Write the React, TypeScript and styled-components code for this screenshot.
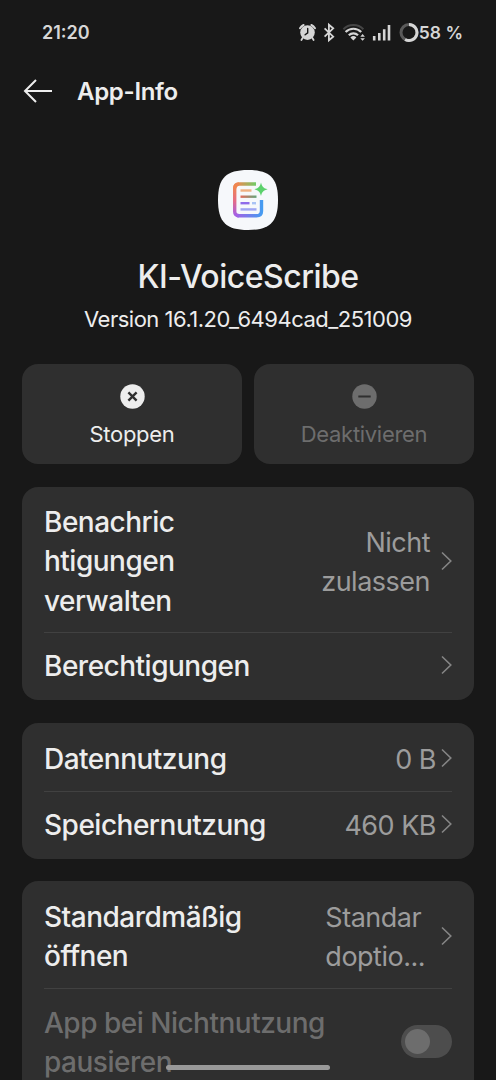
import React from "react";
import styled, { createGlobalStyle } from "styled-components";

const GlobalStyle = createGlobalStyle`
  * { box-sizing: border-box; }
  html, body { margin: 0; padding: 0; background: #181818; overflow: hidden; }
  body { font-family: Inter, "Liberation Sans", sans-serif; color: #ededed; }
`;

const Screen = styled.div`
  position: relative;
  width: 496px;
  height: 1080px;
  overflow: hidden;
  background: #181818;
  display: flex;
  flex-direction: column;
`;

const StatusBar = styled.div`
  height: 64px;
  flex: none;
  padding: 0 33px 0 42px;
  display: flex;
  align-items: center;
  justify-content: space-between;
  color: #d6d6d6;
`;

const Tracked = styled.span<{ $size: number; $weight: number; $track?: number }>`
  font-size: ${(p) => p.$size}px;
  font-weight: ${(p) => p.$weight};
  letter-spacing: ${(p) => p.$track ?? 0}px;
  white-space: nowrap;
`;

const StatusIcons = styled.div`
  display: flex;
  align-items: center;
`;

const Header = styled.header`
  height: 54px;
  flex: none;
  padding-left: 23px;
  display: flex;
  align-items: center;
  gap: 25px;
`;

const Hero = styled.section`
  height: 246px;
  flex: none;
  padding-top: 51px;
  display: flex;
  flex-direction: column;
  align-items: center;
`;

const AppName = styled.h1`
  margin: 25px 0 0;
  font-size: 32px;
  line-height: 42px;
  font-weight: 500;
  letter-spacing: -0.5px;
`;

const Version = styled.p`
  margin: 6px 0 0;
  font-size: 22px;
  line-height: 30px;
  letter-spacing: -0.5px;
`;

const Actions = styled.div`
  flex: none;
  display: grid;
  grid-template-columns: 1fr 1fr;
  gap: 12px;
  padding: 0 22px;
`;

const ActionButton = styled.button<{ $track: number }>`
  height: 100px;
  padding: 20px 0 0;
  border: 0;
  border-radius: 16px;
  background: #2f2f2f;
  color: #ededed;
  font-family: inherit;
  font-size: 22px;
  line-height: 28px;
  letter-spacing: ${(p) => p.$track}px;
  display: flex;
  flex-direction: column;
  align-items: center;
  gap: 11px;
  &:disabled { color: #6d6d6d; }
`;

const Card = styled.section<{ $top: number }>`
  flex: none;
  margin: ${(p) => p.$top}px 22px 0;
  padding: 0 22px;
  border-radius: 16px;
  background: #2f2f2f;
`;

const Row = styled.div<{ $height: number; $shift?: number; $divided?: boolean }>`
  height: ${(p) => p.$height}px;
  padding-top: ${(p) => p.$shift ?? 0}px;
  display: flex;
  align-items: center;
  border-bottom: ${(p) => (p.$divided ? "1px solid #414141" : "0")};
`;

const Label = styled.div<{ $track?: number; $muted?: boolean }>`
  flex: 1;
  font-size: 28px;
  line-height: 39.5px;
  font-weight: 500;
  letter-spacing: ${(p) => p.$track ?? -0.5}px;
  color: ${(p) => (p.$muted ? "#6d6d6d" : "#ededed")};
  white-space: nowrap;
`;

const Value = styled.div<{ $gap: number; $track?: number; $align?: string }>`
  font-size: 27px;
  line-height: 39.5px;
  letter-spacing: ${(p) => p.$track ?? -0.5}px;
  color: #9c9c9c;
  text-align: ${(p) => p.$align ?? "right"};
  margin-right: ${(p) => p.$gap}px;
  white-space: nowrap;
`;

const ChevronSvg = styled.svg`
  flex: none;
  display: block;
  margin-top: -3px;
`;

const Switch = styled.div`
  width: 51px;
  height: 33px;
  border-radius: 17px;
  padding: 4px;
  background: #4d4d4d;
  margin-top: -3px;
`;

const Thumb = styled.div`
  width: 25px;
  height: 25px;
  border-radius: 50%;
  background: #6d6d6d;
`;

const HomeBar = styled.div`
  position: absolute;
  left: 166px;
  top: 1065px;
  width: 164px;
  height: 5px;
  border-radius: 3px;
  background: #999;
`;

const Chevron = () => (
  <ChevronSvg width="11" height="20" viewBox="0 0 11 20" fill="none" stroke="#858585" strokeWidth="1.6">
    <path d="M1 1.5 9.8 10 1 18.5" />
  </ChevronSvg>
);

const StatusGlyphs = () => (
  <svg width="121" height="24" viewBox="299 20 121 24" fill="none" stroke="#d6d6d6">
    <g strokeLinecap="round">
      <circle cx="308.5" cy="32.6" r="7.3" fill="#d6d6d6" stroke="none" />
      <path d="M301 28.2a9 9 0 0 1 3.6-3.2M316 28.2a9 9 0 0 0-3.6-3.2" strokeWidth="2" />
      <path d="m303.6 38-1.2 2M313.4 38l1.2 2" strokeWidth="1.8" />
      <path d="M308.7 28.5v4.3l-2.6 2" stroke="#181818" strokeWidth="1.4" />
    </g>
    <path d="m325.6 28.4 8.6 8.2-4.3 3.6V24.8l4.3 3.6-8.6 8.2" strokeWidth="1.8" />
    <path d="M344.4 29.2a14.2 14.2 0 0 1 20 0" stroke="#454545" strokeWidth="2" />
    <path d="M346.6 32a11 11 0 0 1 15.6 0" strokeWidth="2.2" />
    <path d="M349.8 35.2a6.6 6.6 0 0 1 9.2 0" strokeWidth="2.2" />
    <path d="m351.4 37.4 3 3.2 3-3.2a4.4 4.4 0 0 0-6 0z" fill="#d6d6d6" stroke="none" />
    <path d="m361.3 36.8 2.3-2.7 2.3 2.7zM361.3 38.2h4.6l-2.3 2.6z" fill="#d6d6d6" stroke="none" />
    <path d="M375.2 36v4.5M380.3 33v7.5M385.2 29.3v11.2M390 25v15.5" strokeWidth="2.6" />
    <circle cx="410" cy="32.5" r="8" stroke="#5a5a5a" strokeWidth="3" />
    <path d="M410 24.5a8 8 0 1 1-3.9 15" strokeWidth="3" />
  </svg>
);

const AppIcon = () => (
  <svg width="62" height="62" viewBox="0 0 62 62" fill="none">
    <defs>
      <linearGradient id="outline" x1="17" y1="14" x2="46" y2="48" gradientUnits="userSpaceOnUse">
        <stop offset="0" stopColor="#ee8553" />
        <stop offset="0.28" stopColor="#ea7867" />
        <stop offset="0.55" stopColor="#9c68da" />
        <stop offset="1" stopColor="#3ba0ee" />
      </linearGradient>
      <linearGradient id="top" x1="20" y1="0" x2="40" y2="0" gradientUnits="userSpaceOnUse">
        <stop stopColor="#ee8850" />
        <stop offset="1" stopColor="#69cf68" />
      </linearGradient>
      <linearGradient id="side" x1="17" y1="18" x2="17" y2="46" gradientUnits="userSpaceOnUse">
        <stop stopColor="#ef8651" />
        <stop offset="0.5" stopColor="#e56c86" />
        <stop offset="1" stopColor="#a55fe5" />
      </linearGradient>
      <linearGradient id="bottom" x1="18" y1="0" x2="45" y2="0" gradientUnits="userSpaceOnUse">
        <stop stopColor="#a55fe5" />
        <stop offset="1" stopColor="#459cf1" />
      </linearGradient>
      <linearGradient id="line" x1="23" y1="0" x2="39" y2="0" gradientUnits="userSpaceOnUse">
        <stop stopColor="#e8695b" />
        <stop offset="1" stopColor="#68a47c" />
      </linearGradient>
    </defs>
    <path d="M31 1C53 1 61 9 61 31S53 61 31 61 1 53 1 31 9 1 31 1Z" fill="#f6f8fb" />
    <g strokeWidth="3.4">
      <path d="M39 15H22.5q-4.5 0-4.8 4.5" stroke="url(#top)" />
      <path d="M22 15q-4.3.2-4.3 4.5v23q0 4 4.3 4.3" stroke="url(#side)" />
      <path d="M20 46.2q1 .6 2.5.6h17q5 0 5-4.8V31" stroke="url(#bottom)" />
    </g>
    <path d="M23.5 21.5h11" stroke="#f0b082" strokeWidth="2.4" />
    <path d="M23.5 27.7h16" stroke="url(#line)" strokeWidth="2.4" />
    <path d="M23.5 34.2h9" stroke="#8f6bea" strokeWidth="2.4" />
    <path d="M35 34.2h4" stroke="#a9c3f5" strokeWidth="2.4" />
    <path d="M23.5 40.4h16" stroke="#9fa5f3" strokeWidth="2.4" />
    <path d="M44 13.5c1.1 4.3 2.4 5.7 6.7 6.8-4.3 1.1-5.6 2.5-6.7 6.8-1.1-4.3-2.4-5.7-6.7-6.8 4.3-1.1 5.6-2.5 6.7-6.8Z" fill="#5bd16c" />
  </svg>
);

export default function App() {
  return (
    <Screen>
      <GlobalStyle />
      <StatusBar>
        <Tracked $size={18} $weight={600}>21:20</Tracked>
        <StatusIcons>
          <StatusGlyphs />
          <Tracked $size={17.5} $weight={600}>58 %</Tracked>
        </StatusIcons>
      </StatusBar>
      <Header>
        <svg width="29" height="26" viewBox="0 0 29 26" fill="none" stroke="#ededed" strokeWidth="2">
          <path d="M29 13H2M13 2 2 13l11 11" />
        </svg>
        <Tracked $size={24} $weight={600} $track={-0.3}>App-Info</Tracked>
      </Header>
      <Hero>
        <AppIcon />
        <AppName>KI-VoiceScribe</AppName>
        <Version>Version 16.1.20_6494cad_251009</Version>
      </Hero>
      <Actions>
        <ActionButton $track={-0.3}>
          <svg width="25" height="25" viewBox="0 0 25 25">
            <circle cx="12.5" cy="12.5" r="12.2" fill="#ededed" />
            <path d="m8.4 8.4 8.2 8.2M16.6 8.4l-8.2 8.2" stroke="#2f2f2f" strokeWidth="2.4" />
          </svg>
          Stoppen
        </ActionButton>
        <ActionButton $track={-0.3} disabled>
          <svg width="25" height="25" viewBox="0 0 25 25">
            <circle cx="12.5" cy="12.5" r="12.2" fill="#6d6d6d" />
            <path d="M6.3 12.5h12.4" stroke="#2f2f2f" strokeWidth="2" />
          </svg>
          Deaktivieren
        </ActionButton>
      </Actions>
      <Card $top={23}>
        <Row $height={146} $shift={5} $divided>
          <Label>Benachric<br />htigungen<br />verwalten</Label>
          <Value $gap={11}>Nicht<br />zulassen</Value>
          <Chevron />
        </Row>
        <Row $height={67}>
          <Label>Berechtigungen</Label>
          <Chevron />
        </Row>
      </Card>
      <Card $top={23}>
        <Row $height={69} $shift={5} $divided>
          <Label>Datennutzung</Label>
          <Value $gap={5}>0 B</Value>
          <Chevron />
        </Row>
        <Row $height={67}>
          <Label>Speichernutzung</Label>
          <Value $gap={5}>460 KB</Value>
          <Chevron />
        </Row>
      </Card>
      <Card $top={22}>
        <Row $height={108} $shift={5} $divided>
          <Label>Standardmäßig<br />öffnen</Label>
          <Value $gap={16} $align="left">Standar<br />doptio...</Value>
          <Chevron />
        </Row>
        <Row $height={108}>
          <Label $muted>App bei Nichtnutzung<br />pausieren</Label>
          <Switch><Thumb /></Switch>
        </Row>
      </Card>
      <HomeBar />
    </Screen>
  );
}
